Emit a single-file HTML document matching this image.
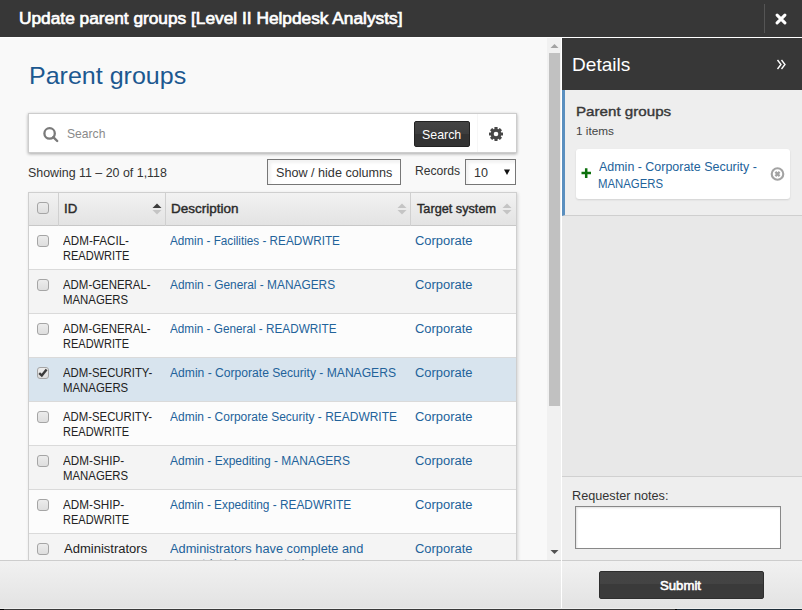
<!DOCTYPE html>
<html><head><meta charset="utf-8">
<style>
*{box-sizing:border-box}
html,body{margin:0;padding:0}
body{width:802px;height:610px;overflow:hidden;position:relative;background:#f9f9f9;font-family:"Liberation Sans",sans-serif;color:#333;font-size:13px}
.abs{position:absolute}
.tx{position:absolute;white-space:nowrap;line-height:1;transform-origin:0 0}
#titlebar{left:0;top:0;width:802px;height:37px;background:#373737}
#tsep{left:764px;top:4px;width:1px;height:29px;background:#555}
#whiteline{left:0;top:37px;width:802px;height:1px;background:#fff}
#searchbox{left:28px;top:113px;width:489px;height:40px;background:#fff;border:1px solid #cdcdcd;box-shadow:0 1px 3px rgba(0,0,0,.32)}
#searchdiv{left:477px;top:114px;width:1px;height:38px;background:#f6f6f6}
#sbtnbox{left:414px;top:121px;width:56px;height:26px;background:linear-gradient(#444 0,#3d3d3d 50%,#333 50%,#333 100%);border:1px solid #222;border-radius:2px}
#shbtnbox{left:267px;top:159px;width:134px;height:26px;background:#fff;border:1px solid #777;box-shadow:inset 3px 3px 3px rgba(0,0,0,.05)}
#selbox{left:465px;top:159px;width:51px;height:26px;background:#fff;border:1px solid #777;box-shadow:inset 3px 3px 3px rgba(0,0,0,.05)}
#table{left:28px;top:192px;width:489px;height:380px;border:1px solid #cfcfcf;background:#fcfcfc;overflow:hidden;box-shadow:1px 1px 3px rgba(0,0,0,.15)}
.hdr{position:absolute;left:0;top:0;width:488px;height:33px;background:linear-gradient(#f2f2f2,#e3e3e3);border-bottom:1px solid #c8c8c8}
.vd{position:absolute;top:0;width:1px;height:33px;background:#d0d0d0}
.row{position:absolute;left:0;width:488px;height:44px;border-bottom:1px solid #dadada}
.cb{position:absolute;left:8px;width:12px;height:12px;border:1px solid #a5a5a5;border-radius:3px;background:linear-gradient(#ececec,#dedede)}
#scroll{left:547px;top:38px;width:14px;height:522px;background:#f1f1f1}
#thumb{left:549px;top:53px;width:11px;height:353px;background:#c1c1c1}
#right{left:562px;top:38px;width:240px;height:522px;background:#e8e8e8}
#vline{left:561px;top:38px;width:1px;height:572px;background:#fff}
#dhead{left:562px;top:38px;width:240px;height:52px;background:#373737}
#sect{left:562px;top:90px;width:240px;height:126px;background:#eeeeee;border-left:3px solid #5a8fbf;border-bottom:1px solid #cfcfcf}
#card{left:576px;top:149px;width:214px;height:50px;background:#fff;border-radius:3px;box-shadow:0 1px 2px rgba(0,0,0,.12)}
#notesec{left:562px;top:476px;width:240px;height:84px;background:#eeeeee;border-top:1px solid #d0d0d0}
#ta{left:575px;top:506px;width:206px;height:43px;background:#fff;border:1px solid #888;box-shadow:inset 1px 1px 2px rgba(0,0,0,.12)}
#footer{left:0;top:560px;width:802px;height:50px;background:linear-gradient(#f1f1f1,#e2e2e2);border-top:1px solid #cdcdcd}
#fbot{left:0;top:609px;width:802px;height:1px;background:linear-gradient(to right,#000 0,#000 4px,#3a3a3a 4px,#3a3a3a 675px,#000 675px,#000 677px,#1d2c37 677px)}
#fhl{left:0;top:608px;width:802px;height:1px;background:#efefef}
#submitbox{left:599px;top:571px;width:165px;height:28px;background:linear-gradient(#454545 0,#434343 45%,#3a3a3a 45%,#3a3a3a 100%);border:1px solid #2e2e2e;border-radius:2px}
</style></head><body>
<div id="titlebar" class="abs"></div>
<div id="title" class="tx" style="left:19.17px;top:11.10px;font-size:16px;font-weight:normal;-webkit-text-stroke:0.65px #fff;color:#fff;transform:scaleX(1.0806);">Update parent groups [Level II Helpdesk Analysts]</div>
<div id="tsep" class="abs"></div>
<svg class="abs" style="left:775.4px;top:12.6px" width="12" height="12" viewBox="0 0 12 12"><path d="M2.1 2.1 L9.9 9.9 M9.9 2.1 L2.1 9.9" stroke="#fff" stroke-width="3" stroke-linecap="round"/></svg>
<div id="whiteline" class="abs"></div>
<div id="searchbox" class="abs"></div>
<div id="searchdiv" class="abs"></div>
<svg class="abs" style="left:42px;top:126px" width="18" height="18" viewBox="0 0 18 18"><circle cx="7.6" cy="7.4" r="5.2" fill="none" stroke="#7a7a7a" stroke-width="2.3"/><path d="M11.3 11.1 L15.2 15" stroke="#7a7a7a" stroke-width="2.4" stroke-linecap="round"/></svg>
<div id="sbtnbox" class="abs"></div>
<svg class="abs" style="left:488px;top:126px" width="16" height="16" viewBox="0 0 16 16"><g fill="#474747"><circle cx="8" cy="8" r="5.3"/><rect x="6.4" y="1" width="3.2" height="14" rx="0.4"/><rect x="1" y="6.4" width="14" height="3.2" rx="0.4"/><rect x="6.4" y="1" width="3.2" height="14" rx="0.4" transform="rotate(45 8 8)"/><rect x="6.4" y="1" width="3.2" height="14" rx="0.4" transform="rotate(-45 8 8)"/></g><circle cx="8" cy="8" r="2.3" fill="#fff"/></svg>
<div id="shbtnbox" class="abs"></div>
<div id="selbox" class="abs"></div>
<svg class="abs" style="left:504px;top:169px" width="6" height="6" viewBox="0 0 6 6"><path d="M0 0.5 L6 0.5 L3 6Z" fill="#111"/></svg>
<div id="table" class="abs">
 <div class="hdr">
  <div class="cb" style="top:9px"></div>
  <div class="vd" style="left:29px"></div>
  <svg style="position:absolute;left:122.5px;top:10px" width="10" height="12" viewBox="0 0 10 12"><path d="M0.5 5 L5 0.4 L9.5 5Z" fill="#3c3c3c"/><path d="M0.5 7 L5 11.6 L9.5 7Z" fill="#c4c4c4"/></svg>
  <div class="vd" style="left:136px"></div>
  <svg style="position:absolute;left:367.6px;top:10px" width="10" height="12" viewBox="0 0 10 12"><path d="M0.5 5 L5 0.4 L9.5 5Z" fill="#c4c4c4"/><path d="M0.5 7 L5 11.6 L9.5 7Z" fill="#c4c4c4"/></svg>
  <div class="vd" style="left:381px"></div>
  <svg style="position:absolute;left:473.4px;top:10px" width="10" height="12" viewBox="0 0 10 12"><path d="M0.5 5 L5 0.4 L9.5 5Z" fill="#c4c4c4"/><path d="M0.5 7 L5 11.6 L9.5 7Z" fill="#c4c4c4"/></svg>
 </div>
 <div class="row" style="top:33px;background:#fcfcfc"><div class="cb" style="top:9px"></div></div>
 <div class="row" style="top:77px;background:#f4f4f4"><div class="cb" style="top:9px"></div></div>
 <div class="row" style="top:121px;background:#fcfcfc"><div class="cb" style="top:9px"></div></div>
 <div class="row" style="top:165px;background:#d8e4ee"><div class="cb" style="top:9px"><svg style="position:absolute;left:0;top:0" width="10" height="10" viewBox="0 0 10 10"><path d="M1.2 5.2 L3.8 7.6 L8.6 1.6" fill="none" stroke="#3a3a3a" stroke-width="2.4"/></svg></div></div>
 <div class="row" style="top:209px;background:#fcfcfc"><div class="cb" style="top:9px"></div></div>
 <div class="row" style="top:253px;background:#f4f4f4"><div class="cb" style="top:9px"></div></div>
 <div class="row" style="top:297px;background:#fcfcfc"><div class="cb" style="top:9px"></div></div>
 <div class="row" style="top:341px;background:#f4f4f4"><div class="cb" style="top:9px"></div></div>
</div>
<div id="h1" class="tx" style="left:28.69px;top:63.50px;font-size:24px;font-weight:normal;color:#1c5890;transform:scaleX(1.0428);">Parent groups</div>
<div id="stxt" class="tx" style="left:66.67px;top:127.55px;font-size:12.8px;font-weight:normal;color:#8a8a8a;transform:scaleX(0.9477);">Search</div>
<div id="sbtn" class="tx" style="left:421.95px;top:128.69px;font-size:12.8px;font-weight:normal;color:#fff;transform:scaleX(0.9672);">Search</div>
<div id="showing" class="tx" style="left:28.30px;top:166.71px;font-size:12.8px;font-weight:normal;color:#333;transform:scaleX(0.9694);">Showing 11 – 20 of 1,118</div>
<div id="shbtn" class="tx" style="left:276.13px;top:166.71px;font-size:12.8px;font-weight:normal;color:#333;transform:scaleX(0.9854);">Show / hide columns</div>
<div id="records" class="tx" style="left:414.62px;top:164.70px;font-size:12.8px;font-weight:normal;color:#333;transform:scaleX(0.9471);">Records</div>
<div id="selv" class="tx" style="left:474.39px;top:166.51px;font-size:12.8px;font-weight:normal;color:#333;transform:scaleX(0.9824);">10</div>
<div id="hid" class="tx" style="left:64.07px;top:203.35px;font-size:12.8px;font-weight:normal;-webkit-text-stroke:0.4px #2a2a2a;color:#2a2a2a;transform:scaleX(1.0299);">ID</div>
<div id="hdesc" class="tx" style="left:170.83px;top:203.08px;font-size:12.8px;font-weight:normal;-webkit-text-stroke:0.4px #2a2a2a;color:#2a2a2a;transform:scaleX(1.0550);">Description</div>
<div id="htgt" class="tx" style="left:417.36px;top:203.40px;font-size:12.8px;font-weight:normal;-webkit-text-stroke:0.4px #2a2a2a;color:#2a2a2a;transform:scaleX(0.9922);">Target system</div>
<div id="r0a" class="tx" style="left:63.44px;top:234.63px;font-size:12.5px;font-weight:normal;color:#222;transform:scaleX(0.9317);">ADM-FACIL-</div>
<div id="r0b" class="tx" style="left:63.47px;top:249.63px;font-size:12.5px;font-weight:normal;color:#222;transform:scaleX(0.8834);">READWRITE</div>
<div id="r1a" class="tx" style="left:63.43px;top:278.63px;font-size:12.5px;font-weight:normal;color:#222;transform:scaleX(0.9136);">ADM-GENERAL-</div>
<div id="r1b" class="tx" style="left:63.43px;top:293.63px;font-size:12.5px;font-weight:normal;color:#222;transform:scaleX(0.9107);">MANAGERS</div>
<div id="r2a" class="tx" style="left:63.43px;top:322.63px;font-size:12.5px;font-weight:normal;color:#222;transform:scaleX(0.9136);">ADM-GENERAL-</div>
<div id="r2b" class="tx" style="left:62.51px;top:337.63px;font-size:12.5px;font-weight:normal;color:#222;transform:scaleX(0.8806);">READWRITE</div>
<div id="r3a" class="tx" style="left:63.42px;top:366.63px;font-size:12.5px;font-weight:normal;color:#222;transform:scaleX(0.9084);">ADM-SECURITY-</div>
<div id="r3b" class="tx" style="left:63.45px;top:381.63px;font-size:12.5px;font-weight:normal;color:#222;transform:scaleX(0.9115);">MANAGERS</div>
<div id="r4a" class="tx" style="left:63.40px;top:410.63px;font-size:12.5px;font-weight:normal;color:#222;transform:scaleX(0.9077);">ADM-SECURITY-</div>
<div id="r4b" class="tx" style="left:62.51px;top:425.63px;font-size:12.5px;font-weight:normal;color:#222;transform:scaleX(0.8806);">READWRITE</div>
<div id="r5a" class="tx" style="left:63.43px;top:454.63px;font-size:12.5px;font-weight:normal;color:#222;transform:scaleX(0.9362);">ADM-SHIP-</div>
<div id="r5b" class="tx" style="left:63.43px;top:469.63px;font-size:12.5px;font-weight:normal;color:#222;transform:scaleX(0.9107);">MANAGERS</div>
<div id="r6a" class="tx" style="left:63.43px;top:498.63px;font-size:12.5px;font-weight:normal;color:#222;transform:scaleX(0.9361);">ADM-SHIP-</div>
<div id="r6b" class="tx" style="left:62.52px;top:513.63px;font-size:12.5px;font-weight:normal;color:#222;transform:scaleX(0.8816);">READWRITE</div>
<div id="r7a" class="tx" style="left:64.31px;top:543.24px;font-size:12.5px;font-weight:normal;color:#222;transform:scaleX(1.0412);">Administrators</div>
<div id="d0" class="tx" style="left:170.41px;top:235.38px;font-size:12.5px;font-weight:normal;color:#22629a;transform:scaleX(0.9374);">Admin - Facilities - READWRITE</div>
<div id="k0" class="tx" style="left:415.00px;top:234.96px;font-size:12.5px;font-weight:normal;color:#22629a;transform:scaleX(1.0337);">Corporate</div>
<div id="d1" class="tx" style="left:170.41px;top:279.38px;font-size:12.5px;font-weight:normal;color:#22629a;transform:scaleX(0.9505);">Admin - General - MANAGERS</div>
<div id="k1" class="tx" style="left:415.00px;top:278.96px;font-size:12.5px;font-weight:normal;color:#22629a;transform:scaleX(1.0336);">Corporate</div>
<div id="d2" class="tx" style="left:170.42px;top:323.38px;font-size:12.5px;font-weight:normal;color:#22629a;transform:scaleX(0.9401);">Admin - General - READWRITE</div>
<div id="k2" class="tx" style="left:415.00px;top:322.96px;font-size:12.5px;font-weight:normal;color:#22629a;transform:scaleX(1.0337);">Corporate</div>
<div id="d3" class="tx" style="left:170.37px;top:367.38px;font-size:12.5px;font-weight:normal;color:#22629a;transform:scaleX(0.9683);">Admin - Corporate Security - MANAGERS</div>
<div id="k3" class="tx" style="left:415.01px;top:366.97px;font-size:12.5px;font-weight:normal;color:#22629a;transform:scaleX(1.0335);">Corporate</div>
<div id="d4" class="tx" style="left:170.38px;top:411.38px;font-size:12.5px;font-weight:normal;color:#22629a;transform:scaleX(0.9584);">Admin - Corporate Security - READWRITE</div>
<div id="k4" class="tx" style="left:415.00px;top:410.96px;font-size:12.5px;font-weight:normal;color:#22629a;transform:scaleX(1.0337);">Corporate</div>
<div id="d5" class="tx" style="left:170.38px;top:455.38px;font-size:12.5px;font-weight:normal;color:#22629a;transform:scaleX(0.9592);">Admin - Expediting - MANAGERS</div>
<div id="k5" class="tx" style="left:415.00px;top:454.96px;font-size:12.5px;font-weight:normal;color:#22629a;transform:scaleX(1.0336);">Corporate</div>
<div id="d6" class="tx" style="left:170.44px;top:499.38px;font-size:12.5px;font-weight:normal;color:#22629a;transform:scaleX(0.9479);">Admin - Expediting - READWRITE</div>
<div id="k6" class="tx" style="left:415.00px;top:498.96px;font-size:12.5px;font-weight:normal;color:#22629a;transform:scaleX(1.0337);">Corporate</div>
<div id="d7" class="tx" style="left:170.26px;top:543.24px;font-size:12.5px;font-weight:normal;color:#22629a;transform:scaleX(1.0230);">Administrators have complete and</div>
<div id="k7" class="tx" style="left:415.00px;top:542.96px;font-size:12.5px;font-weight:normal;color:#22629a;transform:scaleX(1.0336);">Corporate</div>
<div id="d7b" class="tx" style="left:170.26px;top:558.24px;font-size:12.5px;font-weight:normal;color:#22629a;transform:scaleX(1.0230);">unrestricted access to the</div>
<div id="scroll" class="abs"></div>
<svg class="abs" style="left:550px;top:43px" width="9" height="6" viewBox="0 0 9 6"><path d="M0.5 5 L4.5 1 L8.5 5Z" fill="#a3a3a3"/></svg>
<div id="thumb" class="abs"></div>
<svg class="abs" style="left:550px;top:549px" width="9" height="6" viewBox="0 0 9 6"><path d="M0.5 1 L4.5 5 L8.5 1Z" fill="#505050"/></svg>
<div id="right" class="abs"></div>
<div id="dhead" class="abs"></div>
<svg class="abs" style="left:776px;top:59px" width="11" height="11" viewBox="0 0 11 11"><path d="M1.5 1 L5 5.5 L1.5 10 M5.5 1 L9 5.5 L5.5 10" fill="none" stroke="#fff" stroke-width="1.35"/></svg>
<div id="sect" class="abs"></div>
<div id="card" class="abs"></div>
<svg class="abs" style="left:580.5px;top:168px" width="11" height="11" viewBox="0 0 11 11"><path d="M5.2 0.3 V10 M0.5 5.1 H10" stroke="#0d700d" stroke-width="2.5"/></svg>
<svg class="abs" style="left:769px;top:166px" width="17" height="17" viewBox="0 0 17 17"><circle cx="8.5" cy="8" r="5.8" fill="none" stroke="#a3a3a3" stroke-width="2.1"/><path d="M6.4 5.9 L10.6 10.1 M10.6 5.9 L6.4 10.1" stroke="#a3a3a3" stroke-width="2.2"/></svg>
<div id="notesec" class="abs"></div>
<div id="ta" class="abs"></div>
<div id="dtitle" class="tx" style="left:571.77px;top:55.55px;font-size:18.5px;font-weight:normal;color:#fff;transform:scaleX(1.0310);">Details</div>
<div id="pg" class="tx" style="left:575.60px;top:105.49px;font-size:13.5px;font-weight:normal;-webkit-text-stroke:0.4px #383838;color:#383838;transform:scaleX(1.1217);">Parent groups</div>
<div id="items" class="tx" style="left:576.12px;top:126.43px;font-size:11.2px;font-weight:normal;color:#444;transform:scaleX(1.0535);">1 items</div>
<div id="ct1" class="tx" style="left:598.92px;top:161.49px;font-size:12.5px;font-weight:normal;color:#22629a;transform:scaleX(0.9964);">Admin - Corporate Security -</div>
<div id="ct2" class="tx" style="left:597.62px;top:178.18px;font-size:12.5px;font-weight:normal;color:#22629a;transform:scaleX(0.9088);">MANAGERS</div>
<div id="notes" class="tx" style="left:572.24px;top:489.59px;font-size:12.8px;font-weight:normal;color:#333;transform:scaleX(0.9891);">Requester notes:</div>
<div id="footer" class="abs"></div>
<div id="vline" class="abs"></div>
<div id="submitbox" class="abs"></div>
<div id="submit" class="tx" style="left:659.58px;top:579.99px;font-size:12.8px;font-weight:normal;-webkit-text-stroke:0.6px #fff;color:#fff;transform:scaleX(1.0287);">Submit</div>
<div id="fhl" class="abs"></div><div id="fbot" class="abs"></div>
</body></html>
